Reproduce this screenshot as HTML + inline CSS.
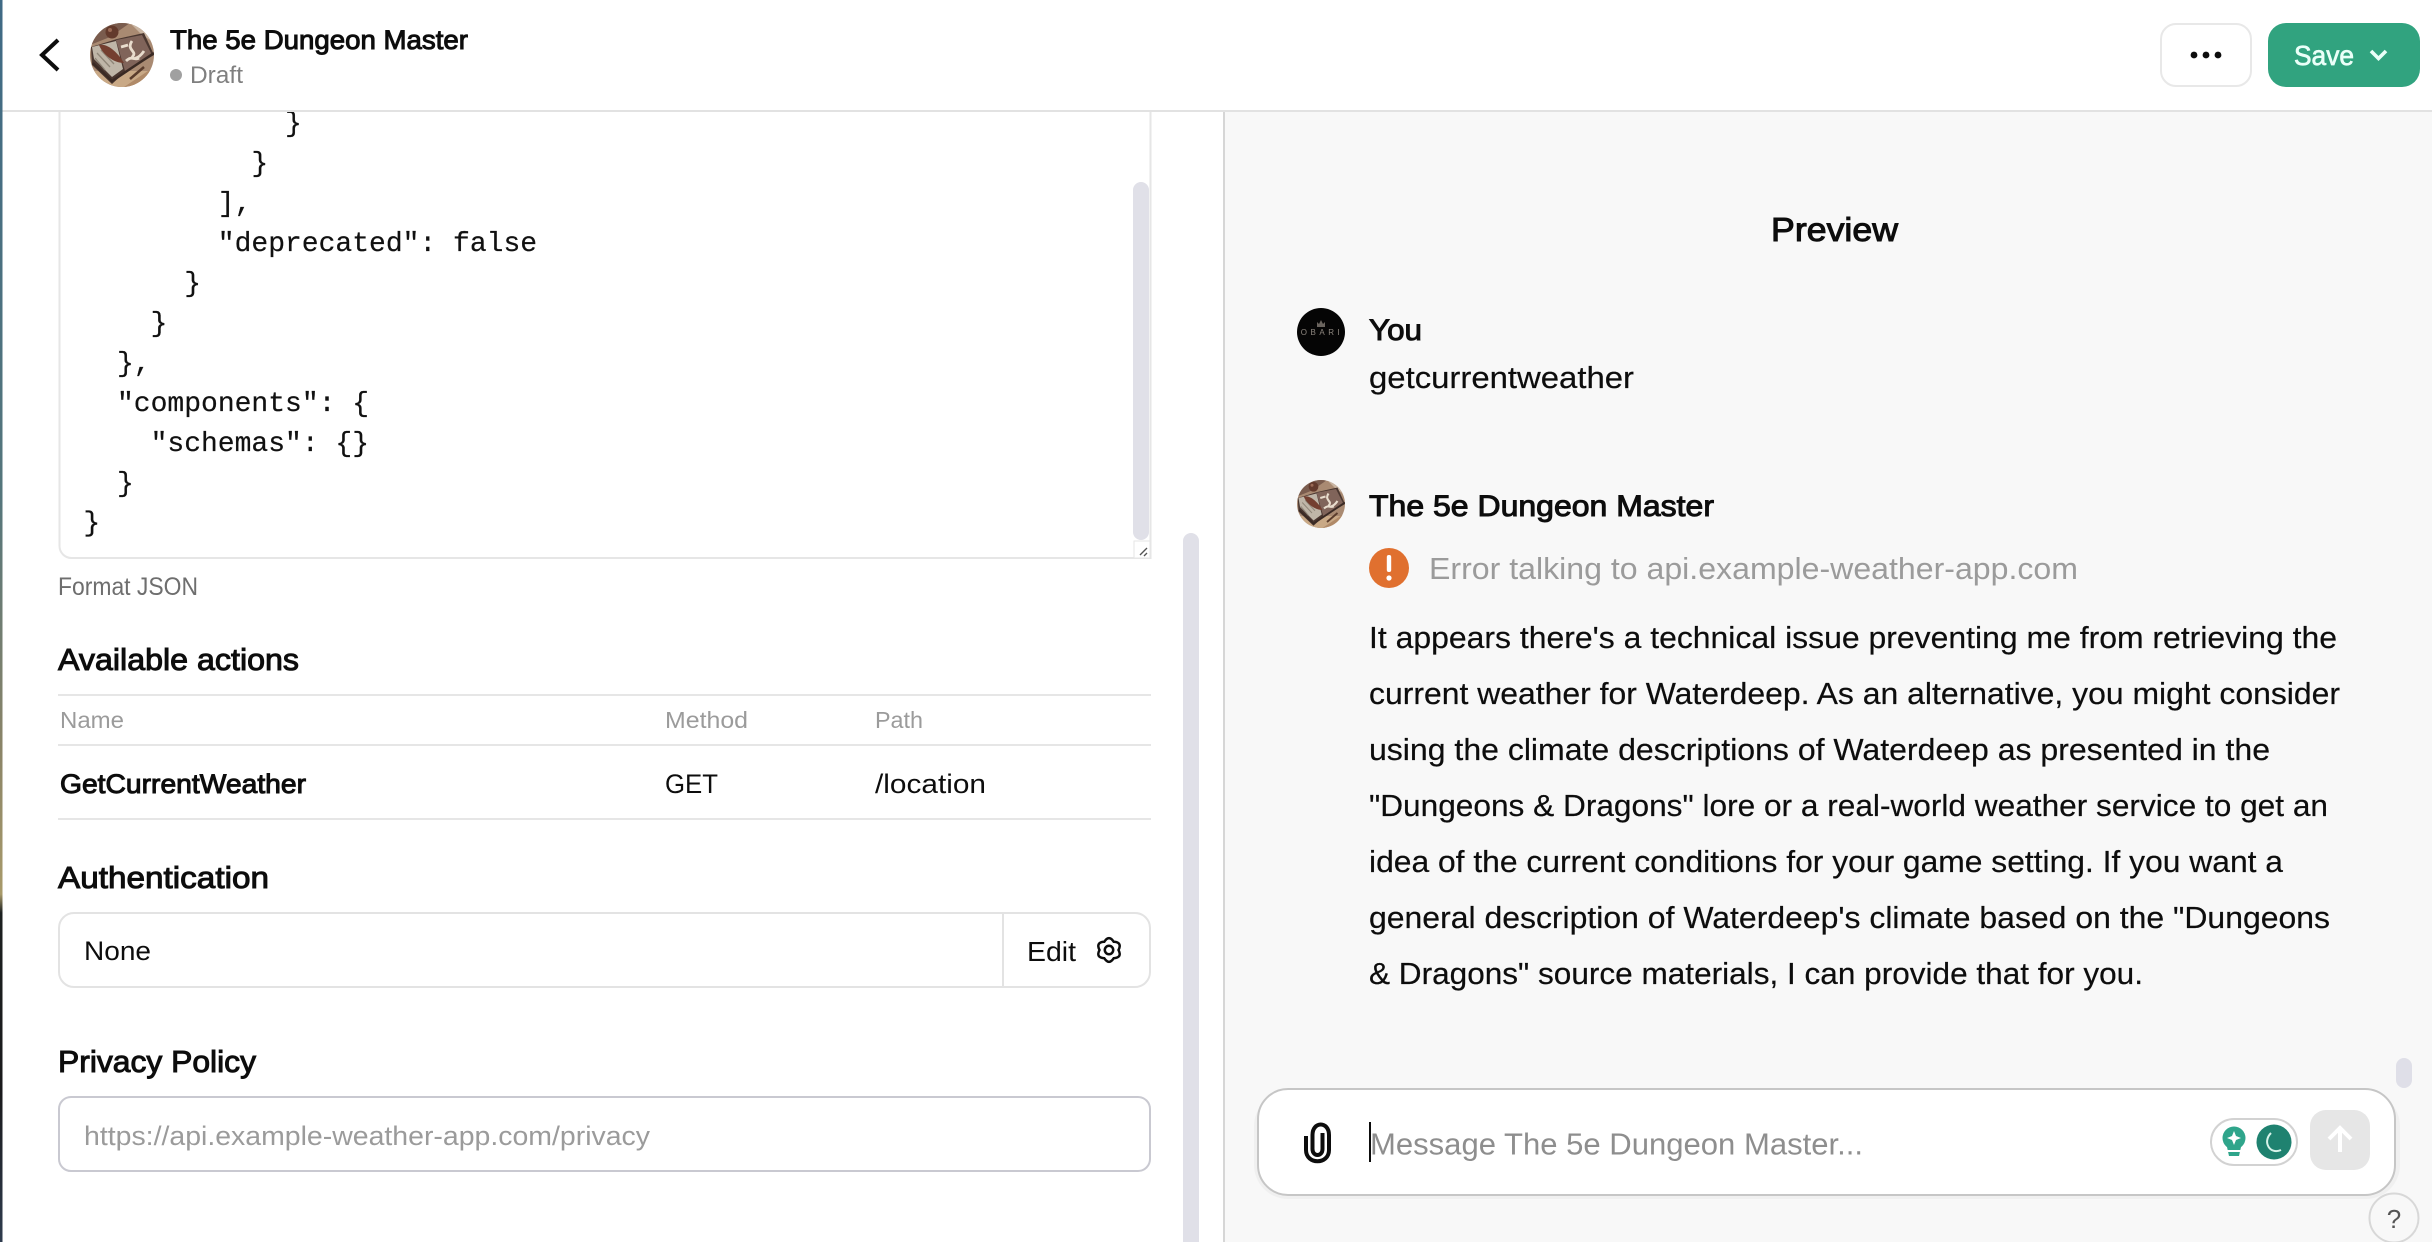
<!DOCTYPE html>
<html>
<head>
<meta charset="utf-8">
<style>
html,body{margin:0;padding:0;background:#fff;width:2432px;height:1242px;overflow:hidden}
svg{display:block}
text{font-family:"Liberation Sans",sans-serif;fill:#0d0d0d;white-space:pre}
.m{stroke:#0d0d0d;stroke-width:1px}
.mono{font-family:"Liberation Mono",monospace;font-size:28px;fill:#111;stroke:#111;stroke-width:.2px}
.p{font-size:31px;stroke:#0d0d0d;stroke-width:.2px}
</style>
</head>
<body>
<svg width="2432" height="1242" viewBox="0 0 2432 1242" xmlns="http://www.w3.org/2000/svg">
<defs>
<linearGradient id="strip" x1="0" y1="0" x2="0" y2="1">
<stop offset="0" stop-color="#3f6a85"/><stop offset=".4" stop-color="#55767c"/><stop offset=".6" stop-color="#8a8468"/><stop offset=".72" stop-color="#a89a6a"/><stop offset=".735" stop-color="#1c2020"/><stop offset=".88" stop-color="#1a1a1c"/><stop offset="1" stop-color="#2f3c4e"/>
</linearGradient>
<clipPath id="cc"><circle cx="32" cy="32" r="32"/></clipPath>
<symbol id="book" viewBox="0 0 64 64">
<g clip-path="url(#cc)">
<rect width="64" height="64" fill="#a98a72"/>
<path d="M0 0 H40 L20 14 L0 22Z" fill="#7a5c4e"/>
<path d="M40 0 H64 V20 L50 10Z" fill="#c9b5a2"/>
<rect y="48" width="64" height="16" fill="#c9a986"/>
<path d="M34 64 L64 44 V64Z" fill="#b08a68"/>
<path d="M1 24 L27 16 L54 10 L64 32 L34 50 L22 61 L2 42Z" fill="#4a3730"/>
<path d="M2 24 L26 18 L33 46 L22 54 L4 36Z" fill="#bfb6a8"/>
<path d="M7 30 L20 44 M11 27 L24 41 M5 35 L15 47" stroke="#8f8678" stroke-width="1.3"/>
<path d="M26 17 L52 12 L62 32 L35 48Z" fill="#80645a"/>
<path d="M42 18 C36 27 47 28 43 33 C40 37 48 37 54 28 M36 38 C42 32 45 38 49 35 M31 24 L38 22" stroke="#e8dccd" stroke-width="2.8" fill="none"/>
<path d="M9 22 C18 20 28 30 34 40 C24 40 13 32 9 22Z" fill="#743f30"/>
<circle cx="22" cy="9" r="6.5" fill="#633a2c"/><circle cx="20" cy="7" r="2" fill="#9a6a55"/>
<path d="M3 40 L22 58 L64 30" stroke="#3a2a24" stroke-width="2.5" fill="none"/>
<path d="M40 56 L54 44" stroke="#5a3c2c" stroke-width="2.5"/>
</g>
</symbol>
</defs>

<rect width="2432" height="1242" fill="#fff"/>
<rect x="1224" y="110" width="1208" height="1132" fill="#f8f8f8"/>
<rect x="1223" y="110" width="2" height="1132" fill="#d6d6d6"/>
<rect width="2.5" height="1242" fill="url(#strip)"/>

<!-- JSON editor -->
<path d="M59.5 112 V546 a12 12 0 0 0 12 12 H1150.5 V112" fill="#fff" stroke="#e6e6e6" stroke-width="2"/>
<text class="mono" x="285" y="131">}</text>
<text class="mono" x="251.4" y="171">}</text>
<text class="mono" x="217.8" y="211">],</text>
<text class="mono" x="217.8" y="251">"deprecated": false</text>
<text class="mono" x="184.2" y="291">}</text>
<text class="mono" x="150.6" y="331">}</text>
<text class="mono" x="117" y="371">},</text>
<text class="mono" x="117" y="411">"components": {</text>
<text class="mono" x="150.6" y="451">"schemas": {}</text>
<text class="mono" x="117" y="491">}</text>
<text class="mono" x="83.4" y="530.5">}</text>
<rect x="1133" y="182" width="16" height="358" rx="8" fill="#e0e0e8"/>
<rect x="1134" y="541" width="16" height="17" fill="#fff" stroke="#e6e6e6"/>
<path d="M1140 555 L1147 548 M1144 556 L1147 553" stroke="#555" stroke-width="1.4"/>
<rect x="1183" y="533" width="16" height="720" rx="8" fill="#e0e0e8"/>

<text x="58" y="595" font-size="25" style="fill:#6e6e6e" textLength="140" lengthAdjust="spacingAndGlyphs">Format JSON</text>

<!-- Actions -->
<text class="m" x="58" y="670" font-size="31" textLength="241" lengthAdjust="spacingAndGlyphs">Available actions</text>
<rect x="58" y="694" width="1093" height="2" fill="#e6e6e6"/>
<text x="60" y="728" font-size="23" style="fill:#9b9b9b" textLength="64" lengthAdjust="spacingAndGlyphs">Name</text>
<text x="665" y="728" font-size="23" style="fill:#9b9b9b" textLength="83" lengthAdjust="spacingAndGlyphs">Method</text>
<text x="875" y="728" font-size="23" style="fill:#9b9b9b" textLength="48" lengthAdjust="spacingAndGlyphs">Path</text>
<rect x="58" y="744" width="1093" height="2" fill="#e6e6e6"/>
<text class="m" x="60" y="793" font-size="27" textLength="246" lengthAdjust="spacingAndGlyphs">GetCurrentWeather</text>
<text x="665" y="793" font-size="27" textLength="53" lengthAdjust="spacingAndGlyphs">GET</text>
<text x="875" y="793" font-size="27" textLength="111" lengthAdjust="spacingAndGlyphs">/location</text>
<rect x="58" y="818" width="1093" height="2" fill="#e6e6e6"/>

<!-- Authentication -->
<text class="m" x="58" y="888" font-size="31" textLength="211" lengthAdjust="spacingAndGlyphs">Authentication</text>
<rect x="59" y="913" width="1091" height="74" rx="15" fill="#fff" stroke="#e3e3e3" stroke-width="2"/>
<rect x="1002" y="913" width="2" height="74" fill="#e3e3e3"/>
<text x="84" y="960" font-size="27" textLength="67" lengthAdjust="spacingAndGlyphs">None</text>
<text x="1027" y="961" font-size="28" textLength="49" lengthAdjust="spacingAndGlyphs">Edit</text>
<g transform="translate(1109 950)" fill="none" stroke="#0d0d0d" stroke-width="2.5">
<path d="M-4.75 -8.2 Q0 -15.5 4.75 -8.2 Q13.4 -7.75 9.5 0 Q13.4 7.75 4.75 8.2 Q0 15.5 -4.75 8.2 Q-13.4 7.75 -9.5 0 Q-13.4 -7.75 -4.75 -8.2Z"/>
<circle r="4.2"/>
</g>

<!-- Privacy -->
<text class="m" x="58" y="1072" font-size="31" textLength="198" lengthAdjust="spacingAndGlyphs">Privacy Policy</text>
<rect x="59" y="1097" width="1091" height="74" rx="12" fill="#fff" stroke="#c9c9d1" stroke-width="2"/>
<text x="84" y="1145" font-size="27" style="fill:#9b9b9b" textLength="566" lengthAdjust="spacingAndGlyphs">https://api.example-weather-app.com/privacy</text>

<!-- Header -->
<rect x="2.5" width="2430" height="110" fill="#fff"/>
<rect x="2.5" y="110" width="2430" height="2" fill="#e2e2e2"/>
<path d="M58 40 L42 55 L58 70" fill="none" stroke="#0d0d0d" stroke-width="4"/>
<use href="#book" x="90" y="23" width="64" height="64"/>
<text class="m" x="170" y="49" font-size="27" textLength="298" lengthAdjust="spacingAndGlyphs">The 5e Dungeon Master</text>
<circle cx="176" cy="75" r="6" fill="#a0a0a0"/>
<text x="190" y="83" font-size="24" style="fill:#7f7f7f" textLength="53" lengthAdjust="spacingAndGlyphs">Draft</text>
<rect x="2161" y="24" width="90" height="62" rx="15" fill="#fff" stroke="#e8e8e8" stroke-width="2"/>
<circle cx="2194" cy="55" r="3.4" fill="#0d0d0d"/><circle cx="2206" cy="55" r="3.4" fill="#0d0d0d"/><circle cx="2218" cy="55" r="3.4" fill="#0d0d0d"/>
<rect x="2268" y="23" width="152" height="64" rx="18" fill="#31a37f"/>
<text x="2294" y="65" font-size="28" style="fill:#eafff8;stroke:#eafff8;stroke-width:.7px" textLength="60" lengthAdjust="spacingAndGlyphs">Save</text>
<path d="M2371 51 L2378.5 58.5 L2386 51" fill="none" stroke="#eafff8" stroke-width="3.6"/>

<!-- Preview -->
<text class="m" x="1771" y="241" font-size="33" textLength="127" lengthAdjust="spacingAndGlyphs">Preview</text>
<circle cx="1321" cy="332" r="24" fill="#050505"/>
<text x="1322" y="335" font-size="8" text-anchor="middle" style="fill:#8f8880" letter-spacing="3.5">OBARI</text>
<path d="M1317 327 V322 L1319 324 L1321 320 L1323 324 L1325 322 V327Z" fill="#6a645e"/>
<text class="m" x="1369" y="340" font-size="30" textLength="53" lengthAdjust="spacingAndGlyphs">You</text>
<text class="p" x="1369" y="388" textLength="265" lengthAdjust="spacingAndGlyphs">getcurrentweather</text>

<use href="#book" x="1297" y="480" width="48" height="48"/>
<text class="m" x="1369" y="516" font-size="30" textLength="345" lengthAdjust="spacingAndGlyphs">The 5e Dungeon Master</text>
<circle cx="1389" cy="568" r="20" fill="#e0702f"/>
<rect x="1386.8" y="555" width="4.4" height="17" rx="2" fill="#fff"/><circle cx="1389" cy="578" r="2.6" fill="#fff"/>
<text x="1429" y="579" font-size="31" style="fill:#9b9b9b" textLength="649" lengthAdjust="spacingAndGlyphs">Error talking to api.example-weather-app.com</text>
<text class="p" x="1369" y="648" textLength="968" lengthAdjust="spacingAndGlyphs">It appears there's a technical issue preventing me from retrieving the</text>
<text class="p" x="1369" y="704" textLength="971" lengthAdjust="spacingAndGlyphs">current weather for Waterdeep. As an alternative, you might consider</text>
<text class="p" x="1369" y="760" textLength="901" lengthAdjust="spacingAndGlyphs">using the climate descriptions of Waterdeep as presented in the</text>
<text class="p" x="1369" y="816" textLength="959" lengthAdjust="spacingAndGlyphs">"Dungeons &amp; Dragons" lore or a real-world weather service to get an</text>
<text class="p" x="1369" y="872" textLength="914" lengthAdjust="spacingAndGlyphs">idea of the current conditions for your game setting. If you want a</text>
<text class="p" x="1369" y="928" textLength="961" lengthAdjust="spacingAndGlyphs">general description of Waterdeep's climate based on the "Dungeons</text>
<text class="p" x="1369" y="984" textLength="774" lengthAdjust="spacingAndGlyphs">&amp; Dragons" source materials, I can provide that for you.</text>

<!-- Composer -->
<rect x="2396" y="1058" width="16" height="30" rx="8" fill="#dfdfe8"/>
<rect x="1254" y="1092" width="1146" height="107" rx="34" fill="#000" opacity=".03"/>
<rect x="1258" y="1089" width="1137" height="106" rx="30" fill="#fff" stroke="#c6c6c6" stroke-width="2"/>
<path d="M1306 1136 V1150 C1306 1165 1329 1165 1329 1150 V1135 C1329 1121 1312.5 1121 1312.5 1135 V1149 C1312.5 1157 1322.5 1157 1322.5 1149 V1133" fill="none" stroke="#0d0d0d" stroke-width="4"/>
<rect x="1369" y="1122" width="2" height="40" fill="#0d0d0d"/>
<text x="1370" y="1154.5" font-size="31" style="fill:#8e8e8e" textLength="493" lengthAdjust="spacingAndGlyphs">Message The 5e Dungeon Master...</text>
<rect x="2211" y="1119" width="86" height="46" rx="23" fill="#fff" stroke="#d2d2d2" stroke-width="2"/>
<circle cx="2234" cy="1138" r="11.5" fill="#2fa58b"/>
<path d="M2227 1147 H2241 L2239 1156 H2229Z" fill="#2fa58b"/>
<rect x="2226" y="1150" width="16" height="2" fill="#fff"/>
<path d="M2234 1131 L2236 1136 L2241 1138 L2236 1140 L2234 1145 L2232 1140 L2227 1138 L2232 1136Z" fill="#fff"/>
<circle cx="2274" cy="1142" r="17.5" fill="#1f8270"/>
<path d="M2271 1133 C2262 1142 2270 1155 2281 1150" fill="none" stroke="#d8f3ea" stroke-width="2"/>
<rect x="2310" y="1110" width="60" height="60" rx="16" fill="#e6e6e6"/>
<path d="M2340 1152 V1130 M2329 1139 L2340 1128 L2351 1139" fill="none" stroke="#fff" stroke-width="4"/>
<circle cx="2394" cy="1218" r="24.5" fill="#f8f8f8" stroke="#d8d8d8" stroke-width="2"/>
<text x="2394" y="1228" font-size="26" text-anchor="middle" style="fill:#555">?</text>
</svg>
</body>
</html>
